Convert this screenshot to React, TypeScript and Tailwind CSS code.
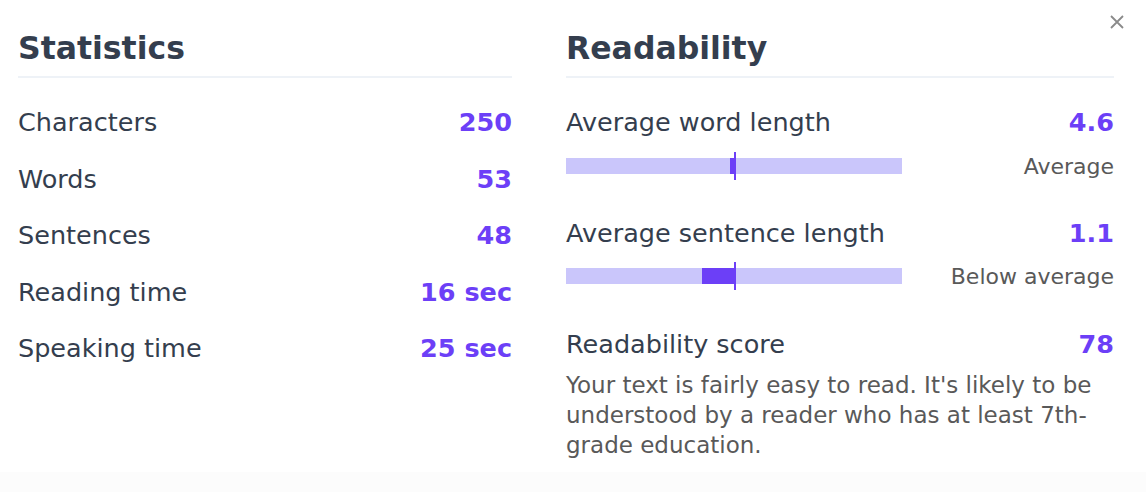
import React from "react";

const stats = [
  { label: "Characters", value: "250" },
  { label: "Words", value: "53" },
  { label: "Sentences", value: "48" },
  { label: "Reading time", value: "16 sec" },
  { label: "Speaking time", value: "25 sec" },
];

const Heading = ({ children }: any) => (
  <div className="pt-[28px] pb-[8px] border-b-2 border-[#eef2f7]">
    <h2 className="text-[31.5px] leading-[40px] font-bold text-[#343e4e]">{children}</h2>
  </div>
);

// light track, dark fill from `from` to the marker at `mark` (px)
const Bar = ({ from, mark }: any) => (
  <div className="relative w-[336px] h-[16px] bg-[#cac6fb]">
    <div className="absolute top-0 h-[16px] bg-[#6c3ff7]" style={{ left: from, width: mark - from }} />
    <div className="absolute top-[-6px] h-[28px] w-[2px] bg-[#6c3ff7]" style={{ left: mark }} />
  </div>
);

export default function App() {
  return (
    <div
      className="relative w-[1146px] h-[492px] bg-white overflow-hidden"
      style={{ fontFamily: '"DejaVu Sans", Verdana, sans-serif' }}
    >
      <button className="absolute right-[22px] top-[15px] text-[#8a8a8a]">
        <svg width="14" height="14" viewBox="0 0 14 14" stroke="currentColor" strokeWidth="1.8">
          <path d="M1 1L13 13M13 1L1 13" />
        </svg>
      </button>

      <div className="flex pl-[18px] h-[472px]">
        <div className="w-[494px]">
          <Heading>Statistics</Heading>
          <div className="mt-[16px] flex flex-col">
            {stats.map((s) => (
              <div key={s.label} className="flex items-center justify-between h-[56.5px]">
                <span className="text-[25.5px] text-[#343e4e]">{s.label}</span>
                <span className="text-[25.5px] font-bold text-[#6c3ff7]">{s.value}</span>
              </div>
            ))}
          </div>
        </div>

        <div className="w-[548px] ml-[54px]">
          <Heading>Readability</Heading>

          <div className="mt-[28px] flex items-center justify-between h-[32px]">
            <span className="text-[25.5px] text-[#343e4e]">Average word length</span>
            <span className="text-[25.5px] font-bold text-[#6c3ff7]">4.6</span>
          </div>
          <div className="mt-[14px] flex items-center justify-between h-[28px]">
            <Bar from={164} mark={168} />
            <span className="text-[22px] text-[#595959]">Average</span>
          </div>

          <div className="mt-[37px] flex items-center justify-between h-[32px]">
            <span className="text-[25.5px] text-[#343e4e]">Average sentence length</span>
            <span className="text-[25.5px] font-bold text-[#6c3ff7]">1.1</span>
          </div>
          <div className="mt-[13px] flex items-center justify-between h-[28px]">
            <Bar from={136} mark={168} />
            <span className="text-[22px] text-[#595959]">Below average</span>
          </div>

          <div className="mt-[38px] flex items-center justify-between h-[32px]">
            <span className="text-[25.5px] text-[#343e4e]">Readability score</span>
            <span className="text-[25.5px] font-bold text-[#6c3ff7]">78</span>
          </div>
          <p className="mt-[10px] text-[23px] leading-[30px] text-[#595959]">
            Your text is fairly easy to read. It's likely to be understood by a reader who has at least 7th-grade education.
          </p>
        </div>
      </div>
      <div className="h-[20px] bg-[#fcfcfc]" />
    </div>
  );
}
